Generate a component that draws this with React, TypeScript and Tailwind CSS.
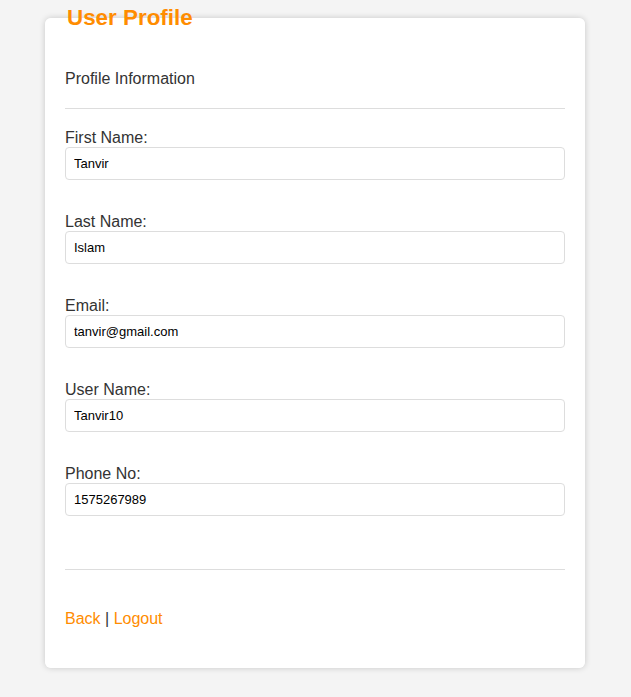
import React from "react";

const fields = [
  { label: "First Name:", value: "Tanvir" },
  { label: "Last Name:", value: "Islam" },
  { label: "Email:", value: "tanvir@gmail.com" },
  { label: "User Name:", value: "Tanvir10" },
  { label: "Phone No:", value: "1575267989" },
];

export default function App() {
  return (
    <div
      className="min-h-[697px] bg-[#f4f4f4] pt-[5px] pb-[30px]"
      style={{ fontFamily: '"Liberation Sans", Arial, sans-serif' }}
    >
      <fieldset className="ml-[45px] w-[540px] rounded-[6px] border-0 bg-white px-5 pb-[40px] pt-[39px] shadow-[0_0_6px_rgba(0,0,0,0.18)]">
        <legend className="px-[2px] text-[22.4px] font-bold leading-[25.76px] text-[#ff8c00]">
          User Profile
        </legend>
        <div className="text-[16px] leading-[18px] text-[#333]">Profile Information</div>
        <hr className="mt-[20px] border-0 border-t border-[#ddd]" />
        <div className="mt-[20px] flex flex-col gap-[33px]">
          {fields.map((f) => (
            <div key={f.label} className="flex flex-col">
              <label className="text-[16px] leading-[18px] text-[#333]">{f.label}</label>
              <input
                readOnly
                value={f.value}
                className="h-[33px] w-full rounded-[4px] border border-[#ddd] bg-white px-2 text-[13px] text-black outline-none"
              />
            </div>
          ))}
        </div>
        <hr className="mt-[53px] border-0 border-t border-[#ddd]" />
        <div className="mt-[40px] text-[16px] leading-[18px] text-[#333]">
          <a className="text-[#ff8c00]">Back</a> | <a className="text-[#ff8c00]">Logout</a>
        </div>
      </fieldset>
    </div>
  );
}
